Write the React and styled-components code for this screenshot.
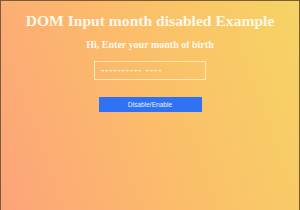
import React from "react";
import styled, { createGlobalStyle } from "styled-components";

const Global = createGlobalStyle`
  html, body { margin: 0; padding: 0; }
  body { width: 300px; height: 210px; overflow: hidden; }
`;

const Page = styled.div`
  box-sizing: border-box;
  width: 300px;
  height: 210px;
  border: 1px solid #7a5a3c;
  border-bottom: none;
  background: linear-gradient(70deg, #fda37a 0%, #fbbd6a 50%, #f6d464 100%);
  display: flex;
  flex-direction: column;
  align-items: center;
  font-family: "Liberation Serif", "Times New Roman", serif;
  color: #fff8ea;
`;

const Title = styled.h1`
  margin: 10px 0 0;
  font-size: 15.6px;
  font-weight: bold;
  line-height: 20px;
`;

const Sub = styled.h2`
  margin: 8px 0 0;
  font-size: 10px;
  font-weight: bold;
  line-height: 12px;
`;

const MonthBox = styled.div`
  box-sizing: border-box;
  margin-top: 10px;
  width: 112px;
  height: 19px;
  border: 1.5px solid #fdebb8;
  display: flex;
  align-items: center;
  padding-left: 6px;
  font-family: "DejaVu Sans", sans-serif;
  font-size: 8px;
  font-weight: bold;
  letter-spacing: 0.8px;
  color: #fdf0d4;
`;

const Button = styled.button`
  margin-top: 17px;
  width: 103px;
  height: 15px;
  border: none;
  background: #2f72f3;
  color: #eaf0ff;
  font-family: "Liberation Sans", Arial, sans-serif;
  font-size: 6.6px;
  padding: 0;
`;

export default function App() {
  return (
    <>
      <Global />
      <Page>
        <Title>DOM Input month disabled Example</Title>
        <Sub>Hi, Enter your month of birth</Sub>
        <MonthBox>---------- ----</MonthBox>
        <Button>Disable/Enable</Button>
      </Page>
    </>
  );
}
